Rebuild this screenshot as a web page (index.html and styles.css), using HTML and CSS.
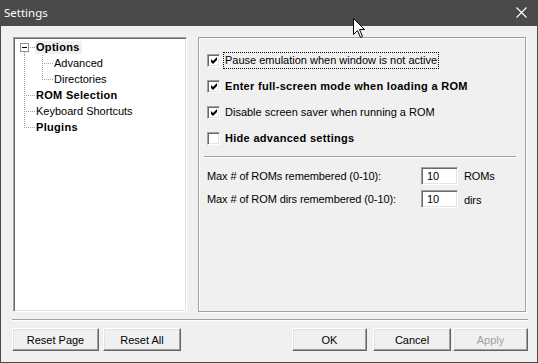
FILE: index.html
```html
<!DOCTYPE html>
<html lang="en">
<head>
    <meta charset="UTF-8">
    <title>Settings</title>
    <link rel="stylesheet" href="styles.css">
</head>
<body>
    <div class="window">
        <div class="titlebar">
            <span class="title">Settings</span>
            <svg class="close" width="11" height="11" viewBox="0 0 11 11">
                <path d="M0.5 0.5 L10.5 10.5 M10.5 0.5 L0.5 10.5" stroke="#fff" stroke-width="1.1" fill="none"/>
            </svg>
        </div>

        <div class="content">
            <div class="panes">
                <!-- left tree -->
                <div class="tree">
                    <div class="node">
                        <span class="conn open"><span class="expander"></span></span>
                        <span class="label bold selected">Options</span>
                    </div>
                    <div class="node">
                        <span class="conn pass"></span>
                        <span class="conn tee"></span>
                        <span class="label">Advanced</span>
                    </div>
                    <div class="node">
                        <span class="conn pass"></span>
                        <span class="conn end"></span>
                        <span class="label">Directories</span>
                    </div>
                    <div class="node">
                        <span class="conn tee"></span>
                        <span class="label bold">ROM Selection</span>
                    </div>
                    <div class="node">
                        <span class="conn tee"></span>
                        <span class="label">Keyboard Shortcuts</span>
                    </div>
                    <div class="node">
                        <span class="conn end"></span>
                        <span class="label bold">Plugins</span>
                    </div>
                </div>

                <!-- options page -->
                <div class="page">
                    <div class="check-row">
                        <span class="box"><svg width="7" height="7" viewBox="0 0 7 7"><polygon points="0,2 2,4 6,0 6,3 2,7 0,5" fill="#000"/></svg></span>
                        <span class="clabel focus">Pause emulation when window is not active</span>
                    </div>
                    <div class="check-row bold">
                        <span class="box"><svg width="7" height="7" viewBox="0 0 7 7"><polygon points="0,2 2,4 6,0 6,3 2,7 0,5" fill="#000"/></svg></span>
                        <span class="clabel">Enter full-screen mode when loading a ROM</span>
                    </div>
                    <div class="check-row">
                        <span class="box"><svg width="7" height="7" viewBox="0 0 7 7"><polygon points="0,2 2,4 6,0 6,3 2,7 0,5" fill="#000"/></svg></span>
                        <span class="clabel">Disable screen saver when running a ROM</span>
                    </div>
                    <div class="check-row bold">
                        <span class="box"></span>
                        <span class="clabel">Hide advanced settings</span>
                    </div>

                    <div class="rule"></div>

                    <div class="num-grid">
                        <span>Max # of ROMs remembered (0-10):</span>
                        <span class="field">10</span>
                        <span>ROMs</span>
                        <span>Max # of ROM dirs remembered (0-10):</span>
                        <span class="field">10</span>
                        <span class="unit-low">dirs</span>
                    </div>
                </div>
            </div>

            <div class="rule wide"></div>

            <div class="buttons">
                <div class="group">
                    <button class="btn w87">Reset Page</button>
                    <button class="btn w78">Reset All</button>
                </div>
                <div class="group right">
                    <button class="btn w75">OK</button>
                    <button class="btn w78 gap6">Cancel</button>
                    <button class="btn w75 gap2" disabled>Apply</button>
                </div>
            </div>
        </div>

        <svg class="cursor" width="13" height="21" viewBox="0 0 13 21">
            <path d="M0.5 0.5 L0.5 16.5 L4.5 12.5 L7.5 19.5 L9.5 18.5 L6.5 11.5 L11.5 11.5 Z" fill="#fff" stroke="#000" stroke-width="1"/>
        </svg>
    </div>
</body>
</html>
```

FILE: styles.css
```css
* {
    margin: 0;
    padding: 0;
    box-sizing: border-box;
}

body {
    font-family: 'Liberation Sans', Arial, sans-serif;
    font-size: 11px;
    color: #000;
    background: #f0f0f0;
}

.window {
    position: relative;
    width: 538px;
    height: 363px;
    background: #f0f0f0;
    border: 1px solid #4b4a48;
    border-top: none;
    display: flex;
    flex-direction: column;
}

.titlebar {
    height: 26px;
    background: #4b4a48;
    display: flex;
    align-items: center;
    justify-content: space-between;
    padding: 0 10px 1px 3px;
}

.title {
    font-family: 'Noto Sans', 'Open Sans', sans-serif;
    font-size: 11.5px;
    color: #fff;
}

.close {
    display: block;
}

.content {
    flex: 1;
    padding: 11px 9px 11px 11px;
    display: flex;
    flex-direction: column;
}

.panes {
    display: flex;
    height: 275px;
}

/* tree view */
.tree {
    width: 174px;
    margin-left: 1px;
    margin-right: 11px;
    background: #fff;
    border: 1px solid;
    border-color: #a0a0a0 #fff #fff #a0a0a0;
    box-shadow: inset 1px 1px 0 #696969, inset -1px -1px 0 #e3e3e3;
    padding: 1px 0 0 3px;
}

.node {
    display: flex;
    align-items: center;
    height: 16px;
}

.conn {
    width: 18px;
    height: 16px;
    flex: none;
    display: flex;
    align-items: center;
    background-repeat: no-repeat;
}

.conn.pass {
    background-image: repeating-linear-gradient(to bottom, #a0a0a0 0 1px, transparent 1px 2px);
    background-size: 1px 16px;
    background-position: 7px 0;
}

.conn.tee {
    background-image:
        repeating-linear-gradient(to bottom, #a0a0a0 0 1px, transparent 1px 2px),
        repeating-linear-gradient(to right, #a0a0a0 0 1px, transparent 1px 2px);
    background-size: 1px 16px, 10px 1px;
    background-position: 7px 0, 9px 8px;
}

.conn.end {
    background-image:
        repeating-linear-gradient(to bottom, #a0a0a0 0 1px, transparent 1px 2px),
        repeating-linear-gradient(to right, #a0a0a0 0 1px, transparent 1px 2px);
    background-size: 1px 9px, 10px 1px;
    background-position: 7px 0, 9px 8px;
}

.conn.open {
    background-image:
        repeating-linear-gradient(to bottom, #a0a0a0 0 1px, transparent 1px 2px),
        repeating-linear-gradient(to right, #a0a0a0 0 1px, transparent 1px 2px);
    background-size: 1px 3px, 5px 1px;
    background-position: 7px 13px, 13px 8px;
}

.expander {
    width: 9px;
    height: 9px;
    margin-left: 3px;
    margin-top: 1px;
    border: 1px solid #919191;
    background: #fff;
    display: flex;
    align-items: center;
    justify-content: center;
}

.expander::before {
    content: "";
    width: 5px;
    height: 1px;
    background: #000;
}

.label {
    line-height: 13px;
    padding: 0 2px 0 1px;
    white-space: nowrap;
}

.bold {
    font-weight: bold;
    letter-spacing: 0.3px;
}

.label.selected {
    background: #f0f0f0;
}

/* options page */
.page {
    width: 328px;
    border: 1px solid #a0a0a0;
    box-shadow: inset 1px 1px 0 #fff, 1px 1px 0 #fff;
    padding: 9px 9px 0 5px;
}

.check-row {
    display: flex;
    align-items: center;
    height: 26px;
    padding-left: 3px;
}

.box {
    width: 13px;
    height: 13px;
    flex: none;
    background: #fff;
    border: 1px solid;
    border-color: #a0a0a0 #fff #fff #a0a0a0;
    box-shadow: inset 1px 1px 0 #696969, inset -1px -1px 0 #e3e3e3;
    display: flex;
    align-items: center;
    justify-content: center;
}

.box svg {
    display: block;
    margin: 1px 0 0 1px;
}

.clabel {
    margin-left: 3px;
    padding: 1px 1px 2px;
    border: 1px solid transparent;
    white-space: nowrap;
}

.clabel.focus {
    border: 1px dotted #000;
}

.rule {
    border-top: 1px solid #a0a0a0;
    border-bottom: 1px solid #fff;
    margin-top: 5px;
}

.rule.wide {
    margin-top: 7px;
}

.num-grid {
    display: grid;
    grid-template-columns: 208px 37px auto;
    grid-auto-rows: 23px;
    column-gap: 6px;
    align-items: center;
    margin-top: 6px;
    padding-left: 3px;
    letter-spacing: -0.1px;
}

.field {
    height: 18px;
    line-height: 16px;
    padding-left: 5px;
    background: #fff;
    border: 1px solid;
    border-color: #a0a0a0 #fff #fff #a0a0a0;
    box-shadow: inset 1px 1px 0 #696969, inset -1px -1px 0 #e3e3e3;
}

.unit-low {
    padding-top: 3px;
}

/* bottom buttons */
.buttons {
    display: flex;
    justify-content: space-between;
    margin-top: 7px;
}

.group {
    display: flex;
    gap: 4px;
}

.group.right {
    gap: 0;
}

.btn {
    height: 23px;
    font-family: inherit;
    font-size: 11px;
    color: #000;
    background: #f0f0f0;
    border: 1px solid;
    border-color: #fff #646464 #646464 #fff;
    box-shadow: inset -1px -1px 0 #a0a0a0, inset 1px 1px 0 #e3e3e3;
}

.btn:disabled {
    color: #a0a0a0;
}

.w87 { width: 87px; }
.w78 { width: 78px; }
.w75 { width: 75px; }
.gap6 { margin-left: 6px; }
.gap2 { margin-left: 2px; }

.cursor {
    position: absolute;
    left: 352px;
    top: 18px;
}
```
